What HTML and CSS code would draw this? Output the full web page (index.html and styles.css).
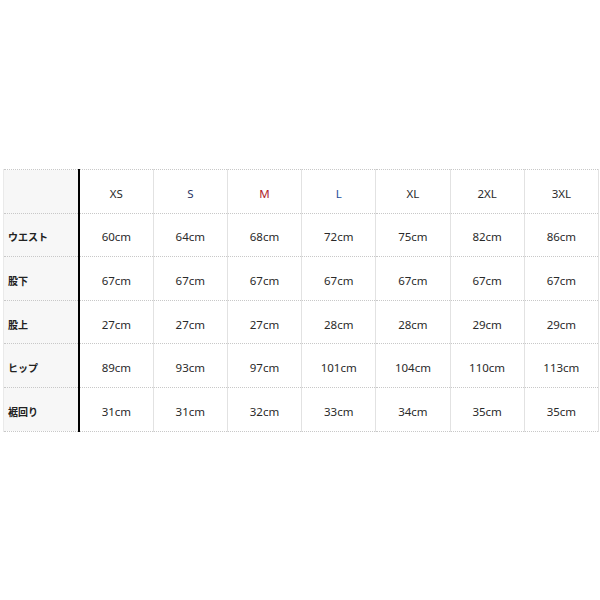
FILE: index.html
```html
<!DOCTYPE html>
<html lang="ja">
<head>
<meta charset="utf-8">
<link rel="stylesheet" href="styles.css">
</head>
<body>
<div class="wrap">
<table class="size">
<thead>
<tr><th class="label"></th><th class="sz">XS</th><th class="sz s">S</th><th class="sz m">M</th><th class="sz l">L</th><th class="sz">XL</th><th class="sz">2XL</th><th class="sz">3XL</th></tr>
</thead>
<tbody>
<tr><th class="label">ウエスト</th><td>60cm</td><td>64cm</td><td>68cm</td><td>72cm</td><td>75cm</td><td>82cm</td><td>86cm</td></tr>
<tr><th class="label">股下</th><td>67cm</td><td>67cm</td><td>67cm</td><td>67cm</td><td>67cm</td><td>67cm</td><td>67cm</td></tr>
<tr><th class="label">股上</th><td>27cm</td><td>27cm</td><td>27cm</td><td>28cm</td><td>28cm</td><td>29cm</td><td>29cm</td></tr>
<tr><th class="label">ヒップ</th><td>89cm</td><td>93cm</td><td>97cm</td><td>101cm</td><td>104cm</td><td>110cm</td><td>113cm</td></tr>
<tr><th class="label">裾回り</th><td>31cm</td><td>31cm</td><td>32cm</td><td>33cm</td><td>34cm</td><td>35cm</td><td>35cm</td></tr>
</tbody>
</table>
</div>
</body>
</html>
```
FILE: styles.css
```css
html, body { margin: 0; padding: 0; background: #fff; }
.wrap { padding: 169px 1px 0 3px; }
.size {
  border-collapse: collapse;
  table-layout: fixed;
  width: 596px;
  font-family: "Noto Sans", "Noto Sans CJK JP", sans-serif;
  font-size: 11.5px;
  color: #2a2a2a;
}
.size th, .size td {
  height: 38.6px;
  padding: 4px 0 0 0;
  text-align: center;
  vertical-align: middle;
  border-top: 1px dotted #c8c8c8;
  border-bottom: 1px dotted #c8c8c8;
  border-left: 1px solid #e2e2e2;
  border-right: 1px solid #e2e2e2;
  font-weight: normal;
}
.size th.label {
  width: 70px;
  background: #f7f7f7;
  text-align: left;
  padding-left: 4px;
  font-family: "Noto Sans CJK JP", sans-serif;
  font-weight: bold;
  font-size: 10px;
  color: #222;
  border-right: 2px solid #000;
  border-left: 1px solid #eaeaea;
}
.size th.sz { font-size: 11.5px; color: #2a2a2a; }
.size th.s { color: #2c3566; }
.size th.m { color: #b0242c; }
.size th.l { color: #1f4f9a; }
```
